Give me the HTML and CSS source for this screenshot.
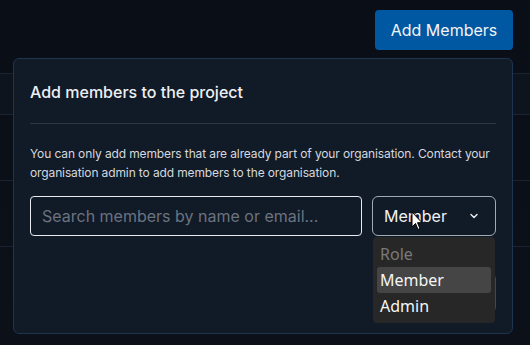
FILE: index.html
```html
<!DOCTYPE html>
<html lang="en">
<head>
  <meta charset="UTF-8">
  <meta name="viewport" content="width=device-width, initial-scale=1.0">
  <title>Project Members</title>
  <link rel="stylesheet" href="styles.css">
</head>
<body>
  <div class="page">
    <div class="toolbar">
      <button class="btn primary">Add Members</button>
    </div>

    <!-- Members table (behind the modal) -->
    <div class="table">
      <div class="row head"></div>
      <div class="row"></div>
      <div class="row"></div>
      <div class="row"></div>
    </div>

    <!-- Add members modal -->
    <div class="modal">
      <h2 class="modal-title">Add members to the project</h2>
      <p class="modal-text">You can only add members that are already part of your organisation. Contact your organisation admin to add members to the organisation.</p>
      <div class="modal-form">
        <input class="search" type="text" placeholder="Search members by name or email...">
        <div class="select">
          <span>Member</span>
          <svg class="chevron" width="12" height="12" viewBox="0 0 12 12"><path d="M3 4.5 6 7.5 9 4.5" fill="none" stroke="#e5e7eb" stroke-width="1.5" stroke-linecap="round" stroke-linejoin="round"/></svg>
          <svg class="cursor" width="14" height="20" viewBox="0 0 14 20"><path d="M1 1v15l3.5-3.5 2.5 6 2-1-2.5-5.8H11z" fill="#fff" stroke="#000" stroke-width="1"/></svg>
          <ul class="options">
            <li class="disabled">Role</li>
            <li class="active">Member</li>
            <li>Admin</li>
          </ul>
        </div>
      </div>
      <div class="modal-footer">
        <button class="btn primary small">Add</button>
      </div>
    </div>
  </div>
</body>
</html>
```

FILE: styles.css
```css
body {
  margin: 0;
  font-family: Inter, "Noto Sans", sans-serif;
  background: #0a0e17;
  color: #e5e7eb;
}
.page {
  position: relative;
  height: 345px;
  overflow: hidden;
  background: linear-gradient(180deg, #0a0e17 0%, #0b1019 100%);
}
.toolbar {
  display: flex;
  justify-content: flex-end;
  padding: 10px 17px 0 0;
}
.btn {
  border: none;
  border-radius: 4px;
  font-family: inherit;
  font-size: 16px;
  color: #f3f4f6;
  cursor: pointer;
}
.primary {
  background-color: #0057a2;
  width: 138px;
  height: 40px;
}
.small {
  width: 80px;
  height: 36px;
}
.table {
  margin-top: 23px;
}
.row {
  height: 65px;
  border-top: 1px solid #1b2330;
}
.row.head {
  height: 40px;
  background: #0e141e;
}
.modal {
  position: absolute;
  left: 13px;
  top: 58px;
  width: 500px;
  height: 276px;
  padding: 0 16px;
  box-sizing: border-box;
  background: #111a27;
  border: 1px solid #1f3450;
  border-radius: 6px;
}
.modal-title {
  margin: 0;
  padding: 21px 0 19px;
  font-size: 16px;
  font-weight: 500;
  line-height: 24px;
  color: #eef0f3;
  border-bottom: 1px solid #2a3647;
}
.modal-text {
  margin: 20px 0 14px;
  font-size: 12px;
  letter-spacing: -0.12px;
  line-height: 19px;
  color: #d5d8de;
}
.modal-form {
  display: flex;
  gap: 10px;
}
.search {
  flex-shrink: 0;
  width: 332px;
  height: 40px;
  box-sizing: border-box;
  padding: 0 11px;
  background: transparent;
  border: 1px solid #e8eaee;
  border-radius: 4px;
  font-family: inherit;
  font-size: 16px;
  color: #e5e7eb;
}
.search::placeholder {
  color: #6b7380;
}
.select {
  position: relative;
  flex-shrink: 0;
  display: flex;
  align-items: center;
  justify-content: space-between;
  width: 124px;
  height: 40px;
  box-sizing: border-box;
  padding: 0 15px 0 11px;
  border: 1px solid #a3a9b3;
  border-radius: 6px;
  font-size: 16px;
  color: #f1f2f4;
}
.cursor {
  position: absolute;
  left: 38px;
  top: 14px;
}
.options {
  position: absolute;
  left: 0;
  top: 40px;
  width: 122px;
  margin: 0;
  padding: 4px;
  box-sizing: border-box;
  list-style: none;
  background: #272727;
  border-radius: 4px;
  font-family: "Noto Sans", sans-serif;
  font-size: 16px;
  z-index: 2;
}
.options li {
  height: 26px;
  line-height: 26px;
  padding-left: 3px;
  border-radius: 3px;
  color: #f5f5f5;
}
.options li.disabled {
  color: #7a7a7a;
}
.options li.active {
  background: #454545;
}
.modal-footer {
  display: flex;
  justify-content: flex-end;
  margin-top: 39px;
}
```
